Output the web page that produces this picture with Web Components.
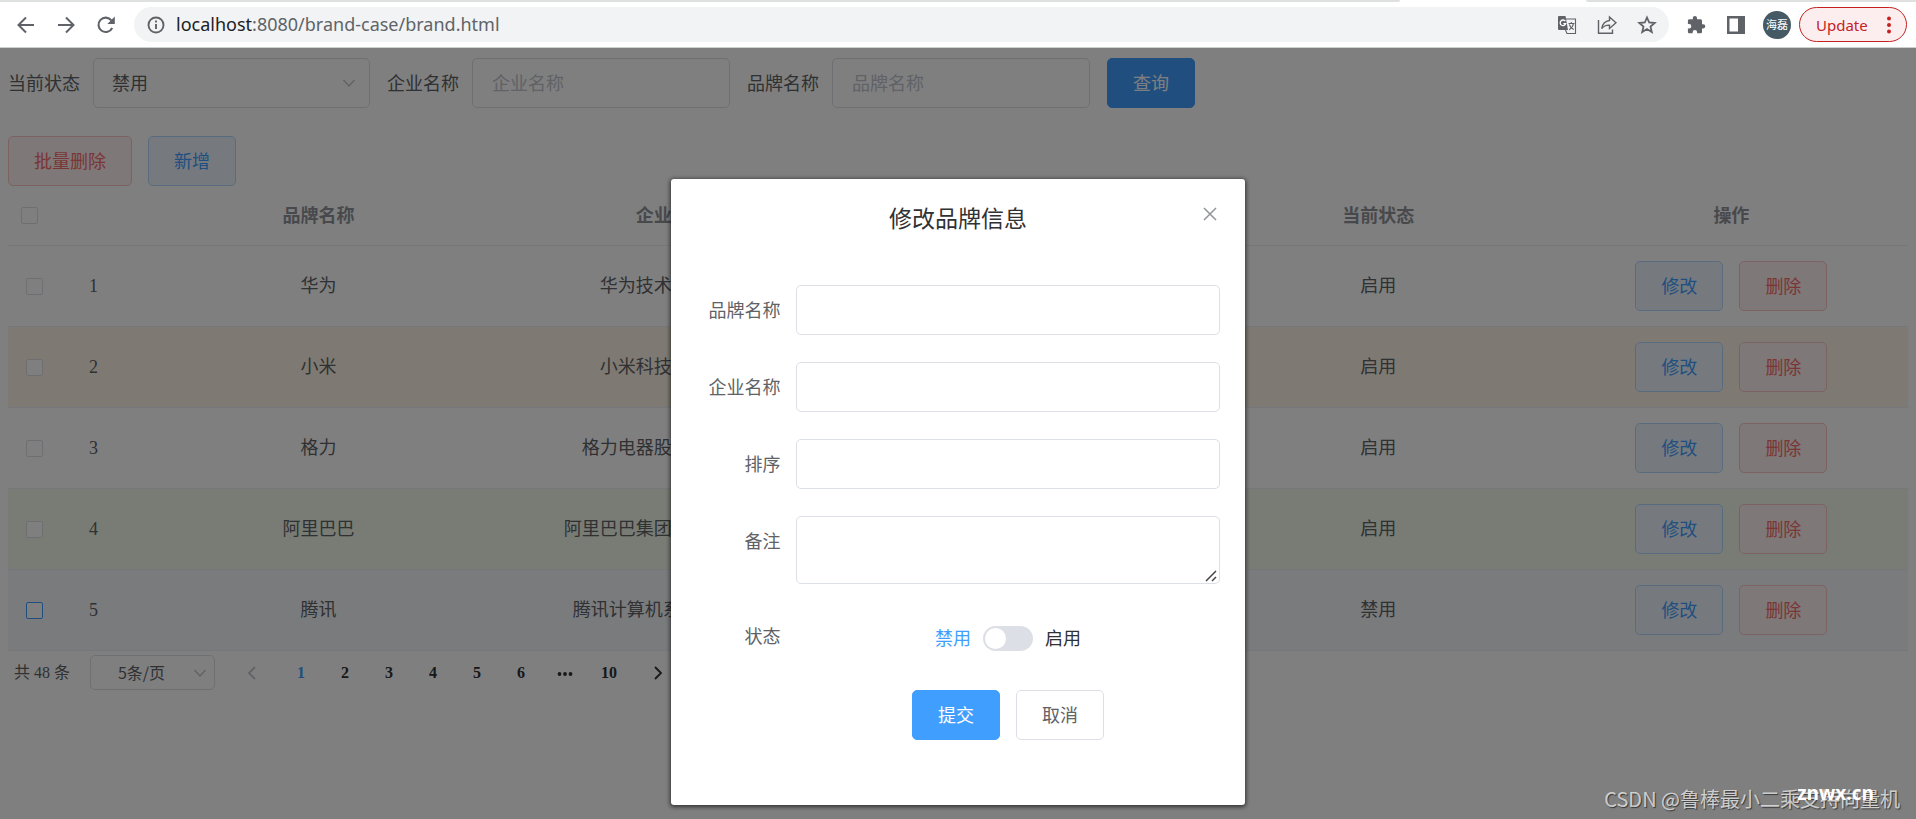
<!DOCTYPE html>
<html lang="zh-CN">
<head>
<meta charset="utf-8">
<title>brand.html</title>
<style>
  html, body { margin: 0; height: 100%; }
  body {
    --sans: "Noto Sans CJK SC", "Noto Sans", sans-serif;
    --serif: "Liberation Serif", "Noto Sans CJK SC", serif;
    font-family: var(--sans);
    font-size: 18px;
    line-height: 24px;
    color: #606266;
    background: #fff;
  }
</style>
</head>
<body>
<app-window></app-window>
<script>
const define = (name, html, init) => {
  const tpl = document.createElement('template');
  tpl.innerHTML = '<style>*,*::before,*::after{box-sizing:border-box}input,select,textarea,button{font:inherit;margin:0}</style>' + html;
  customElements.define(name, class extends HTMLElement {
    constructor() {
      super();
      this.attachShadow({ mode: 'open' }).append(tpl.content.cloneNode(true));
    }
    connectedCallback() { if (init) init(this, this.shadowRoot); }
  });
};

/* Button: kind = primary | primary-plain | danger-plain | default */
define('ui-button', `
<style>
  :host { display: inline-block; --bg: #fff; --bd: #dcdfe6; --fg: #606266; }
  :host([kind="primary"]) { --bg: #409eff; --bd: #409eff; --fg: #fff; }
  :host([kind="primary-plain"]) { --bg: #ecf5ff; --bd: #b3d8ff; --fg: #409eff; }
  :host([kind="danger-plain"]) { --bg: #fef0f0; --bd: #fbc4c4; --fg: #f56c6c; }
  button { display: block; height: 50px; padding: 0 25px 2px; border: 1px solid var(--bd); border-radius: 5px;
    background: var(--bg); color: var(--fg); font-size: 18px; line-height: 24px; white-space: nowrap; cursor: pointer; }
</style>
<button type="button"><slot></slot></button>`);

/* Drop-down with a thin chevron */
define('ui-select', `
<style>
  :host { display: inline-grid; align-items: center; width: 277px; height: 50px; }
  :host([small]) { width: 125px; height: 35px; font-size: 16px; }
  select, svg { grid-area: 1 / 1; }
  select { appearance: none; width: 100%; height: 100%; padding: 0 38px 2px 18px; border: 1px solid #dcdfe6; border-radius: 5px;
    background: #fff; color: #606266; }
  :host([small]) select { padding: 0 28px 2px 6px; text-align: center; text-align-last: center; }
  svg { justify-self: end; width: 14px; height: 14px; margin-right: 14px; pointer-events: none; }
  :host([small]) svg { margin-right: 8px; }
</style>
<select><option></option></select>
<svg viewBox="0 0 14 14" fill="none" stroke="#c0c4cc" stroke-width="1.4"><path d="M1.5 4 7 10l5.500-6"/></svg>`,
(el, root) => {
  root.querySelector('option').textContent = el.getAttribute('value');
  root.querySelector('select').setAttribute('aria-label', el.getAttribute('label'));
});

/* Browser toolbar */
define('browser-bar', `
<style>
  :host { display: block; font-family: "Noto Sans", "Noto Sans CJK SC", sans-serif; background: #fff; border-bottom: 1px solid #ccd0ce; }
  .tabs { display: flex; height: 2px; }
  .tabs i { background: #dee1e0; }
  .tabs i:first-child { flex: 1400; border-bottom-right-radius: 2px; }
  .tabs i:last-child { flex: 330; border-bottom-left-radius: 2px; }
  .tabs span { flex: 186; }
  .bar { display: flex; align-items: center; height: 45px; padding: 0 9px 0 16px; }
  button { display: flex; padding: 0; border: 0; background: none; color: #5f6368; }
  svg { display: block; width: 20px; height: 20px; }
  .nav { display: flex; gap: 20px; margin-right: 18px; }
  .url { flex: 1; display: flex; align-items: center; height: 35px; padding: 0 12px 0 13px; border-radius: 18px; background: #f1f3f4; min-width: 0; }
  .url p { flex: 1; margin: 0 0 0 9px; padding-bottom: 2px; font-size: 18px; line-height: 24px; color: #5f6368; white-space: nowrap; }
  .url b { font-weight: 400; color: #202124; }
  .acts { display: flex; gap: 20px; color: #5f6368; }
  .ext { display: flex; gap: 20px; margin: 0 17px; }
  .me { width: 28px; height: 28px; border-radius: 50%; background: #455a64; color: #fff; font-size: 11px; line-height: 28px; display: block; text-align: center; margin: 0 8px 0 0; }
  .upd { height: 35px; width: 108px; padding: 0 4px 0 16px; align-items: center; justify-content: space-between; border: 1px solid #c5221f; border-radius: 18px;
    background: #fceeee; color: #c5221f; font-size: 15px; line-height: 24px; }
</style>
<div class="tabs"><i></i><span></span><i></i></div>
<div class="bar">
  <div class="nav">
    <button aria-label="Back"><svg viewBox="0 0 20 20" fill="none" stroke="currentColor" stroke-width="2"><path d="M18 10H2.500M10 2.500 2.500 10l7.500 7.500"/></svg></button>
    <button aria-label="Forward"><svg viewBox="0 0 20 20" fill="none" stroke="currentColor" stroke-width="2"><path d="M2 10h15.500M10 2.500l7.500 7.500-7.500 7.500"/></svg></button>
    <button aria-label="Reload"><svg viewBox="0 0 20 20"><path d="M16.200 13a7.200 7.200 0 1 1-.8-7.600" fill="none" stroke="currentColor" stroke-width="2.100"/><path d="M18.800 1.500v7.500h-7.500z" fill="currentColor"/></svg></button>
  </div>
  <div class="url">
    <svg viewBox="0 0 20 20" fill="none" stroke="#5f6368" stroke-width="1.900"><circle cx="9" cy="10" r="7.500"/><path d="M9 9v5M9 5.600v2"/></svg>
    <p><b>localhost</b>:8080/brand-case/brand.html</p>
    <div class="acts">
      <svg viewBox="0 0 20 20"><path d="M2 1h6.500l2.500 14H2a1 1 0 0 1-1-1V2a1 1 0 0 1 1-1z" fill="#5f6368"/><path d="M9 4h9.500v14.500H10L8.500 15" fill="none" stroke="#5f6368" stroke-width="1.100"/><path d="M8.300 6.200a2.800 2.800 0 1 0 .4 2.400H6.400" fill="none" stroke="#fff" stroke-width="1.300"/><path d="M11.500 8.500h6M14.300 7v1.500M16.500 8.500c-.6 3-2.300 5-4.300 6.200M12.300 9.500c.8 2.500 2.500 4 4.400 5" fill="none" stroke="#5f6368" stroke-width="1.100"/></svg>
      <svg viewBox="0 0 20 20" fill="none" stroke="currentColor" stroke-width="1.400"><path d="M1.500 5v13.300h14V14.500"/><path d="M12.500 2 19 7.800l-6.500 5.700v-3.400c-3.500-.2-5.800.9-7.800 3.600.7-4.700 3.400-7.600 7.800-8.200z"/></svg>
      <svg viewBox="0 0 20 20" fill="none" stroke="currentColor" stroke-width="1.800"><path d="m10 2.500 2.200 5 5.500.5-4.200 3.600 1.300 5.400-4.800-2.900L5.200 17l1.300-5.400L2.300 8l5.500-.5z"/></svg>
    </div>
  </div>
  <div class="ext">
    <button aria-label="Extensions"><svg viewBox="0 0 20 20"><path fill="currentColor" d="M17.200 9.200H16V5.900c0-.9-.7-1.600-1.600-1.600H11V3a2.100 2.100 0 0 0-4.200 0v1.300H3.500c-.9 0-1.600.7-1.600 1.600v3.200h1.200a2.200 2.200 0 0 1 0 4.400H1.900v3.200c0 .9.700 1.600 1.600 1.600h3.200v-1.200a2.200 2.200 0 0 1 4.400 0v1.200h3.300c.9 0 1.600-.7 1.600-1.600v-3.300h1.200a2.100 2.100 0 0 0 0-4.200z"/></svg></button>
    <button aria-label="Side panel"><svg viewBox="0 0 20 20"><path fill="currentColor" fill-rule="evenodd" d="M1 1h18v18H1zM3.500 3.500v13h8.500v-13z"/></svg></button>
  </div>
  <span class="me">海磊</span>
  <button class="upd">Update<svg viewBox="0 0 20 20" fill="currentColor"><circle cx="7" cy="3.500" r="2"/><circle cx="7" cy="10" r="2"/><circle cx="7" cy="16.500" r="2"/></svg></button>
</div>`);

/* Search form */
define('search-form', `
<style>
  :host { display: block; }
  form { display: flex; align-items: center; }
  label { margin-right: 13px; padding-bottom: 2px; white-space: nowrap; }
  input { width: 258px; height: 50px; padding: 0 19px 2px; border: 1px solid #dcdfe6; border-radius: 5px; color: #606266; background: #fff; }
  input::placeholder { color: #c0c4cc; opacity: 1; }
  ui-select, input { margin-right: 17px; }
</style>
<form>
  <label>当前状态</label><ui-select label="当前状态" value="禁用"></ui-select>
  <label for="c">企业名称</label><input id="c" placeholder="企业名称">
  <label for="b">品牌名称</label><input id="b" placeholder="品牌名称">
  <ui-button kind="primary">查询</ui-button>
</form>`);

/* Brand table */
define('brand-table', `
<style>
  :host { display: block; }
  table { width: 100%; table-layout: fixed; border-collapse: separate; border-spacing: 0; font-family: var(--serif); text-align: center; }
  th, td { padding: 0; border-bottom: 1px solid #ebeef5; white-space: nowrap; }
  th { height: 60px; color: #909399; font-weight: 700; }
  td { height: 81px; }
  th:first-child { width: 69px; text-align: left; padding-left: 13px; }
  td:first-child { text-align: left; padding-left: 18px; }
  th:nth-child(2) { width: 65px; }
  td:nth-child(2) { text-align: left; padding-left: 12px; }
  .warning td { background: #fdf5e6; }
  .success td { background: #f0f9eb; }
  .hover td { background: #f5f7fa; }
  input { appearance: none; display: block; width: 17px; height: 17px; border: 1px solid #dcdfe6; border-radius: 2px; background: #fff; }
  .hover input { border-color: #409eff; }
  .ops { display: flex; justify-content: center; gap: 16px; font-family: var(--sans); }
</style>
<table>
  <thead><tr><th><input type="checkbox" aria-label="全选"></th><th></th><th>品牌名称</th><th>企业名称</th><th></th><th>当前状态</th><th>操作</th></tr></thead>
  <tbody></tbody>
</table>`,
(el, root) => {
  const rows = [
    ['', '华为', '华为技术有限公司', '启用'],
    ['warning', '小米', '小米科技有限公司', '启用'],
    ['', '格力', '格力电器股份有限公司', '启用'],
    ['success', '阿里巴巴', '阿里巴巴集团控股有限公司', '启用'],
    ['hover', '腾讯', '腾讯计算机系统有限公司', '禁用'],
  ];
  root.querySelector('tbody').innerHTML = rows.map(([cls, brand, company, status], i) => `
    <tr class="${cls}"><td><input type="checkbox" aria-label="选择 ${brand}"></td><td>${i + 1}</td><td>${brand}</td><td>${company}</td><td></td><td>${status}</td>
    <td><div class="ops"><ui-button kind="primary-plain">修改</ui-button><ui-button kind="danger-plain">删除</ui-button></div></td></tr>`).join('');
});

/* Pagination */
define('page-nav', `
<style>
  :host { display: flex; align-items: center; height: 35px; padding-left: 6px; font-family: var(--serif); font-size: 16px; }
  ui-select { font-family: var(--sans); margin: 0 10px 0 20px; }
  button { display: flex; align-items: center; justify-content: center; width: 44px; height: 35px; padding: 0; border: 0; background: none;
    color: #303133; font-weight: 700; }
  button.on { color: #409eff; }
  button.step { width: 54px; }
  svg { width: 16px; height: 16px; }
</style>
<span>共 48 条</span>
<ui-select small label="每页条数" value="5条/页"></ui-select>
<button class="step" aria-label="上一页" disabled><svg viewBox="0 0 16 16" fill="none" stroke="#c0c4cc" stroke-width="1.800"><path d="m11 2-6 6 6 6"/></svg></button>
<button class="on">1</button><button>2</button><button>3</button><button>4</button><button>5</button><button>6</button>
<button aria-label="更多"><svg viewBox="0 0 16 16" fill="#303133"><circle cx="2.500" cy="9" r="1.900"/><circle cx="8" cy="9" r="1.900"/><circle cx="13.500" cy="9" r="1.900"/></svg></button>
<button>10</button>
<button class="step" aria-label="下一页"><svg viewBox="0 0 16 16" fill="none" stroke="#303133" stroke-width="1.800"><path d="m5 2 6 6-6 6"/></svg></button>`);

/* Edit dialog */
define('edit-dialog', `
<style>
  :host { display: block; width: 30%; padding: 25px 25px 65px; border-radius: 3px; background: #fff; box-shadow: 0 1px 4px 1px rgba(0,0,0,.6); }
  header { display: grid; grid-template-columns: 20px 1fr 20px; align-items: start; }
  h2 { grid-column: 2; margin: 0; font-size: 23px; line-height: 26px; font-weight: 400; color: #303133; text-align: center; }
  header button { display: flex; justify-content: center; width: 20px; height: 20px; padding: 0; border: 0; background: none; align-items: center; }
  header svg { width: 14px; height: 14px; }
  form { display: grid; grid-template-columns: 85px 1fr; column-gap: 15px; row-gap: 27px; margin-top: 55px; }
  label { line-height: 48px; text-align: right; }
  input[type=text], textarea { display: block; width: 100%; height: 50px; padding: 0 18px; border: 1px solid #dcdfe6; border-radius: 5px; background: #fff; color: #606266; }
  textarea { height: 68px; resize: vertical; }
  textarea::-webkit-resizer { background: url("data:image/svg+xml,%3Csvg xmlns='http://www.w3.org/2000/svg' width='15' height='15' fill='none' stroke='%23444' stroke-width='1.500'%3E%3Cpath d='M2 13 12 3M8 13l4-4'/%3E%3C/svg%3E") no-repeat; }
  .switch { display: flex; align-items: center; justify-content: center; gap: 12px; height: 54px; color: #303133; }
  .switch span { padding-bottom: 2px; }
  .switch .on { color: #409eff; }
  .switch input { appearance: none; width: 50px; height: 25px; border-radius: 13px; background: #dcdfe6; padding: 2px; display: flex; }
  .switch input::before { content: ""; width: 21px; height: 21px; border-radius: 50%; background: #fff; }
  .foot { grid-column: 2; display: flex; justify-content: center; gap: 16px; margin-top: -2px; }
</style>
<header><h2>修改品牌信息</h2><button type="button" aria-label="关闭"><svg viewBox="0 0 14 14" fill="none" stroke="#909399" stroke-width="1.500"><path d="m1 1 12 12M13 1 1 13"/></svg></button></header>
<form>
  <label for="brand">品牌名称</label><input type="text" id="brand">
  <label for="company">企业名称</label><input type="text" id="company">
  <label for="order">排序</label><input type="text" id="order">
  <label for="desc">备注</label><textarea id="desc"></textarea>
  <label for="state">状态</label><div class="switch"><span class="on">禁用</span><input type="checkbox" id="state"><span>启用</span></div>
  <div class="foot"><ui-button kind="primary">提交</ui-button><ui-button>取消</ui-button></div>
</form>`);

/* Whole window: toolbar, page, and the mask stacked over the page */
define('app-window', `
<style>
  :host { display: flex; flex-direction: column; min-height: 100vh; position: relative; }
  .stack { flex: 1; display: grid; grid-template-columns: 100%; }
  main, .mask { grid-area: 1 / 1; }
  main { padding: 10px 8px 0; }
  .tools { display: flex; gap: 16px; margin-top: 28px; }
  page-nav { margin-top: 4px; }
  .mask { z-index: 1; display: flex; align-items: flex-start; justify-content: center; padding-top: 131px; background: rgba(0,0,0,.5); }
  .mark { position: absolute; z-index: 2; right: 16px; bottom: 6px; font-size: 20px; line-height: 28px;
    color: rgba(235,235,235,.8); text-shadow: 1px 1px 1px rgba(40,40,40,.8); }
  .site { position: absolute; z-index: 3; right: 42px; bottom: 12px; font-family: "Open Sans", sans-serif; font-weight: 700; font-size: 19px; line-height: 28px; color: #fff; }
</style>
<browser-bar></browser-bar>
<div class="stack">
  <main>
    <search-form></search-form>
    <div class="tools"><ui-button kind="danger-plain">批量删除</ui-button><ui-button kind="primary-plain">新增</ui-button></div>
    <brand-table></brand-table>
    <page-nav></page-nav>
  </main>
  <div class="mask"><edit-dialog role="dialog" aria-label="修改品牌信息"></edit-dialog></div>
</div>
<div class="mark">CSDN @鲁棒最小二乘支持向量机</div>
<div class="site">znwx.cn</div>`);

</script>
</body>
</html>
